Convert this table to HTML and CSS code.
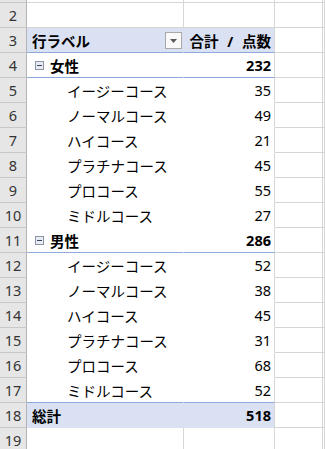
FILE: index.html
```html
<!DOCTYPE html>
<html lang="ja">
<head>
<meta charset="utf-8">
<title>ピボットテーブル</title>
<link rel="stylesheet" href="styles.css">
</head>
<body>
<div class="sheet">
  <div class="row top"><div class="rh"></div><div></div><div></div><div></div><div></div></div>
  <div class="row"><div class="rh">2</div><div></div><div></div><div></div><div></div></div>

  <div class="row head">
    <div class="rh">3</div>
    <div class="lab">行ラベル
      <span class="filter"><svg width="7" height="4" viewBox="0 0 7 4"><path d="M0 0H7L3.5 4Z" fill="#5a5a5a"/></svg></span>
    </div>
    <div class="val caption">合計 / 点数</div>
    <div></div><div></div>
  </div>

  <div class="row grp">
    <div class="rh">4</div>
    <div class="lab"><svg class="tog" width="9" height="9" viewBox="0 0 9 9"><rect x="0.5" y="0.5" width="8" height="8" fill="#e9edf3" stroke="#8a96a8"/><path d="M2 4.5H7" stroke="#3b4456"/></svg>女性</div>
    <div class="val">232</div>
    <div></div><div></div>
  </div>
  <div class="row item"><div class="rh">5</div><div class="lab">イージーコース</div><div class="val">35</div><div></div><div></div></div>
  <div class="row item"><div class="rh">6</div><div class="lab">ノーマルコース</div><div class="val">49</div><div></div><div></div></div>
  <div class="row item"><div class="rh">7</div><div class="lab">ハイコース</div><div class="val">21</div><div></div><div></div></div>
  <div class="row item"><div class="rh">8</div><div class="lab">プラチナコース</div><div class="val">45</div><div></div><div></div></div>
  <div class="row item"><div class="rh">9</div><div class="lab">プロコース</div><div class="val">55</div><div></div><div></div></div>
  <div class="row item"><div class="rh">10</div><div class="lab">ミドルコース</div><div class="val">27</div><div></div><div></div></div>

  <div class="row grp">
    <div class="rh">11</div>
    <div class="lab"><svg class="tog" width="9" height="9" viewBox="0 0 9 9"><rect x="0.5" y="0.5" width="8" height="8" fill="#e9edf3" stroke="#8a96a8"/><path d="M2 4.5H7" stroke="#3b4456"/></svg>男性</div>
    <div class="val">286</div>
    <div></div><div></div>
  </div>
  <div class="row item"><div class="rh">12</div><div class="lab">イージーコース</div><div class="val">52</div><div></div><div></div></div>
  <div class="row item"><div class="rh">13</div><div class="lab">ノーマルコース</div><div class="val">38</div><div></div><div></div></div>
  <div class="row item"><div class="rh">14</div><div class="lab">ハイコース</div><div class="val">45</div><div></div><div></div></div>
  <div class="row item"><div class="rh">15</div><div class="lab">プラチナコース</div><div class="val">31</div><div></div><div></div></div>
  <div class="row item"><div class="rh">16</div><div class="lab">プロコース</div><div class="val">68</div><div></div><div></div></div>
  <div class="row item last"><div class="rh">17</div><div class="lab">ミドルコース</div><div class="val">52</div><div></div><div></div></div>

  <div class="row total"><div class="rh">18</div><div class="lab">総計</div><div class="val">518</div><div></div><div></div></div>
  <div class="row"><div class="rh">19</div><div></div><div></div><div></div><div></div></div>
</div>
</body>
</html>
```

FILE: styles.css
```css
html, body {
  margin: 0;
  padding: 0;
  background: #fff;
  overflow: hidden;
}

.sheet {
  font-family: "Noto Sans", "Noto Sans CJK JP", sans-serif;
  font-size: 14.5px;
  color: #000;
}

/* one worksheet row: row header + columns A..D */
.row {
  display: grid;
  grid-template-columns: 27px 157px 91px 48px 1fr;
  height: 25px;
}

.row > div {
  box-sizing: border-box;
  border-right: 1px solid #d6d6d6;
  border-bottom: 1px solid #d6d6d6;
  display: flex;
  align-items: center;
  white-space: nowrap;
}

.row.top {
  height: 3px;
}

/* row numbers */
.row > .rh {
  background: #e6e6e6;
  border-right-color: #b4b4b4;
  border-bottom-color: #c8c8c8;
  justify-content: center;
  color: #333;
  font-size: 14.5px;
}

/* pivot table cells */
.row > .lab,
.row > .val {
  background: #fff;
  border-bottom-color: #fff;
}

.row > .lab {
  border-right-color: #fff;
  padding-left: 5px;
  position: relative;
}

.row > .val {
  justify-content: flex-end;
  padding-right: 3px;
}

.row > .caption {
  word-spacing: 5px;
}

.head > .lab,
.head > .val,
.total > .lab,
.total > .val {
  background: #d9e1f2;
  font-weight: bold;
}

.head > .lab,
.total > .lab {
  border-right-color: #d9e1f2;
}

.head > .lab,
.head > .val {
  border-bottom-color: #8ea9db;
}

.total > .lab,
.total > .val {
  border-bottom-color: #d9e1f2;
}

.grp > .lab,
.grp > .val {
  font-weight: bold;
  border-bottom-color: #8ea9db;
}

.grp > .lab {
  padding-left: 8px;
}

.tog {
  margin-right: 6px;
  flex: none;
}

.item > .lab {
  padding-left: 40px;
}

.last > .lab,
.last > .val {
  border-bottom-color: #8ea9db;
}

/* field filter button in the header */
.filter {
  position: absolute;
  right: 1px;
  top: 4px;
  width: 17px;
  height: 17px;
  box-sizing: border-box;
  border: 1px solid #a8a8a8;
  background: #fafafa;
  display: flex;
  align-items: center;
  justify-content: center;
}
```
